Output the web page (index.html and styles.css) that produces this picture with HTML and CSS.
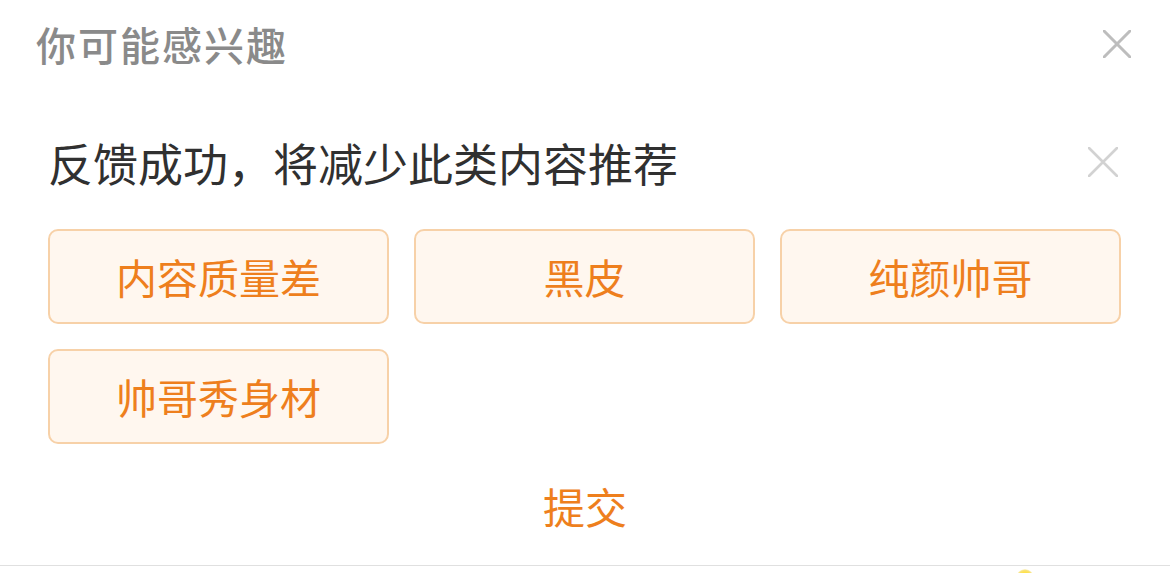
FILE: index.html
```html
<!DOCTYPE html>
<html lang="zh-CN">
<head>
<meta charset="utf-8">
<title>你可能感兴趣</title>
<link rel="stylesheet" href="styles.css">
</head>
<body>
<div class="sheet">
  <header class="sheet-head">
    <h1 class="sheet-title">你可能感兴趣</h1>
    <button class="close close-main" aria-label="关闭">
      <svg viewBox="0 0 28 28" width="28" height="28"><path d="M1 1L27 27M27 1L1 27" /></svg>
    </button>
  </header>

  <div class="notice">
    <p class="notice-text">反馈成功，将减少此类内容推荐</p>
    <button class="close close-notice" aria-label="关闭">
      <svg viewBox="0 0 30 30" width="30" height="30"><path d="M1 1L29 29M29 1L1 29" /></svg>
    </button>
  </div>

  <div class="reasons">
    <button class="reason">内容质量差</button>
    <button class="reason">黑皮</button>
    <button class="reason">纯颜帅哥</button>
    <button class="reason">帅哥秀身材</button>
  </div>

  <div class="submit-row">
    <button class="submit">提交</button>
  </div>

  <div class="divider"></div>
  <div class="footer">
    <span class="sun"></span>
  </div>
</div>
</body>
</html>
```

FILE: styles.css
```css
* {
  box-sizing: border-box;
}

html, body {
  margin: 0;
  padding: 0;
  background: #fff;
}

body {
  font-family: "Noto Sans CJK SC", "Noto Sans", sans-serif;
  width: 1170px;
  height: 573px;
  overflow: hidden;
}

button {
  font-family: inherit;
  background: none;
  border: 0;
  padding: 0;
  margin: 0;
  cursor: pointer;
}

.sheet {
  display: flex;
  flex-direction: column;
}

.sheet-head {
  height: 88px;
  display: flex;
  align-items: center;
  justify-content: space-between;
  padding: 0 39px 0 36px;
}

.sheet-title {
  margin: 0;
  font-size: 40px;
  font-weight: 500;
  color: #8a8a8a;
  line-height: 1;
  letter-spacing: 2px;
}

.close {
  display: flex;
  align-items: center;
  justify-content: center;
}

.close svg path {
  fill: none;
  stroke-linecap: round;
}

.close-main svg path {
  stroke: #bdbdbd;
  stroke-width: 3;
}

.notice {
  margin-top: 32px;
  height: 84px;
  display: flex;
  align-items: center;
  justify-content: space-between;
  padding: 0 52px 0 48px;
}

.notice-text {
  margin: 0;
  font-size: 45px;
  line-height: 1;
  color: #303030;
}

.close-notice svg path {
  stroke: #d2d2d2;
  stroke-width: 2.6;
}

.reasons {
  margin-top: 25px;
  padding: 0 49px 0 48px;
  display: grid;
  grid-template-columns: repeat(3, 1fr);
  grid-auto-rows: 95px;
  gap: 25px;
}

.reason {
  border: 2.5px solid #f7d1a8;
  background: #fff7ef;
  border-radius: 10px;
  color: #ee7f1d;
  font-size: 41px;
  line-height: 1;
  display: flex;
  align-items: center;
  justify-content: center;
}

.submit-row {
  margin-top: 20px;
  height: 84px;
  display: flex;
  align-items: center;
  justify-content: center;
}

.submit {
  color: #ee7f1d;
  font-size: 42px;
  line-height: 1;
}

.divider {
  margin-top: 17px;
  height: 1px;
  background: #e0e0e0;
}

.footer {
  position: relative;
  height: 20px;
}

.sun {
  position: absolute;
  left: 1016px;
  top: 3px;
  width: 18px;
  height: 18px;
  border-radius: 50%;
  background: radial-gradient(circle, #ffe24a 0 45%, #f8e27a 60%, rgba(255, 240, 150, 0) 75%);
}
```
